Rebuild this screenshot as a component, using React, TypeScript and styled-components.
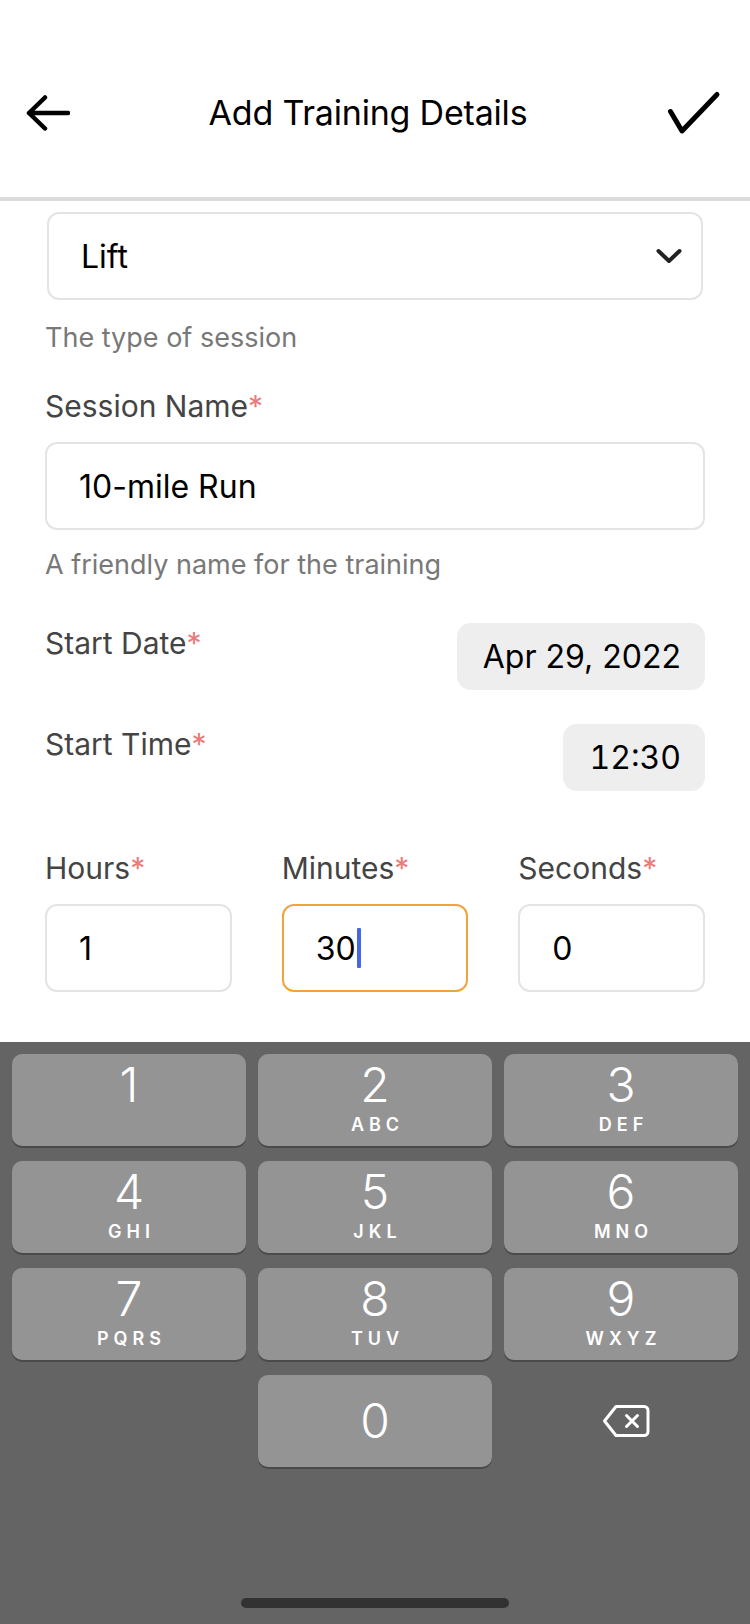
import React from "react";
import styled, { createGlobalStyle } from "styled-components";

const Global = createGlobalStyle`
  html, body { margin: 0; padding: 0; background: #fff; }
  body { font-family: Inter, "Liberation Sans", sans-serif; -webkit-font-smoothing: antialiased; }
  * { box-sizing: border-box; }
`;

const Screen = styled.div`
  width: 750px;
  height: 1624px;
  display: flex;
  flex-direction: column;
  overflow: hidden;
  background: #fff;
`;

const Header = styled.header`
  height: 201px;
  padding: 28px 28px 0 26px;
  display: flex;
  align-items: center;
  justify-content: space-between;
  border-bottom: 4px solid #dcdcdc;
  flex-shrink: 0;
`;

const Title = styled.h1`
  margin: 0;
  font-size: 34px;
  font-weight: 400;
  color: #000;
  letter-spacing: -0.2px;
`;

const IconButton = styled.button`
  border: 0;
  background: none;
  padding: 0;
  display: flex;
  align-items: center;
  justify-content: center;
`;

const Form = styled.main`
  flex: 1;
  padding: 11px 45px 0;
  display: flex;
  flex-direction: column;
`;

const SelectBox = styled.div`
  height: 88px;
  margin: 0 2px;
  border: 2px solid #e4e4e4;
  border-radius: 12px;
  padding: 0 19px 0 32px;
  display: flex;
  align-items: center;
  justify-content: space-between;
  font-size: 32px;
  color: #000;
`;

const Helper = styled.div<{ $mt?: number }>`
  margin-top: ${(p) => p.$mt ?? 18}px;
  font-size: 27px;
  line-height: 40px;
  color: #787878;
`;

const Label = styled.label<{ $mt?: number }>`
  display: block;
  margin-top: ${(p) => p.$mt ?? 0}px;
  font-size: 30px;
  line-height: 40px;
  color: #444;
`;

const Star = styled.span`
  color: #ec7a7a;
`;

const Field = styled.div<{ $focused?: boolean; $mt?: number }>`
  height: 88px;
  margin-top: ${(p) => p.$mt ?? 0}px;
  border: 2px solid ${(p) => (p.$focused ? "#f2a43a" : "#e4e4e4")};
  border-radius: 12px;
  padding: 0 32px;
  display: flex;
  align-items: center;
  font-size: 32px;
  color: #000;
`;

const Caret = styled.span`
  display: inline-block;
  width: 4px;
  height: 40px;
  margin-left: 1px;
  background: #4666e8;
  border-radius: 1px;
`;

const PickerRow = styled.div<{ $mt: number }>`
  margin-top: ${(p) => p.$mt}px;
  display: flex;
  justify-content: space-between;
  align-items: flex-start;
`;

const Pill = styled.div<{ $tabular?: boolean }>`
  height: 67px;
  padding: 0 24px 0 26px;
  border-radius: 14px;
  background: #eeeeee;
  font-size: 32px;
  line-height: 67px;
  color: #000;
  font-variant-numeric: ${(p) => (p.$tabular ? "tabular-nums" : "normal")};
`;

const DurationGrid = styled.div`
  margin-top: 57px;
  display: grid;
  grid-template-columns: repeat(3, 1fr);
  column-gap: 50px;
`;

const Keyboard = styled.div`
  height: 582px;
  flex-shrink: 0;
  background: #646464;
  padding: 12px 12px 0;
  display: flex;
  flex-direction: column;
`;

const Keys = styled.div`
  display: grid;
  grid-template-columns: repeat(3, 1fr);
  column-gap: 12px;
  row-gap: 15px;
  grid-auto-rows: 92px;
`;

const Key = styled.div<{ $centered?: boolean }>`
  background: #949494;
  border-radius: 10px;
  box-shadow: 0 2px 0 #4a4a4a;
  color: #fff;
  display: flex;
  flex-direction: column;
  align-items: center;
  justify-content: ${(p) => (p.$centered ? "center" : "flex-start")};
  padding-top: ${(p) => (p.$centered ? 0 : 7)}px;
`;

const Digit = styled.div`
  font-size: 48px;
  font-weight: 300;
  line-height: 48px;
`;

const Letters = styled.div`
  margin-top: 7px;
  padding-left: 5px;
  font-size: 18px;
  font-weight: 600;
  line-height: 18px;
  letter-spacing: 5px;
`;

const BlankKey = styled.div<{ $shift?: number }>`
  display: flex;
  align-items: center;
  justify-content: center;
  padding-left: ${(p) => p.$shift ?? 0}px;
`;

const HomeBar = styled.div`
  margin-top: auto;
  margin-bottom: 16px;
  align-self: center;
  width: 268px;
  height: 10px;
  border-radius: 5px;
  background: #323232;
`;

const keys: { d: string; l?: string }[] = [
  { d: "1" },
  { d: "2", l: "ABC" },
  { d: "3", l: "DEF" },
  { d: "4", l: "GHI" },
  { d: "5", l: "JKL" },
  { d: "6", l: "MNO" },
  { d: "7", l: "PQRS" },
  { d: "8", l: "TUV" },
  { d: "9", l: "WXYZ" },
];

export default function App() {
  return (
    <Screen>
      <Global />
      <Header>
        <IconButton aria-label="Back">
          <svg width="44" height="36" viewBox="0 0 44 36" fill="none">
            <path
              d="M3 18H42M3 18L19 2.5M3 18L19 33.5"
              stroke="#000"
              strokeWidth="4.5"
              strokeLinecap="round"
              strokeLinejoin="round"
            />
          </svg>
        </IconButton>
        <Title>Add Training Details</Title>
        <IconButton aria-label="Save">
          <svg width="56" height="48" viewBox="0 0 56 48" fill="none">
            <path
              d="M4.5 22.5L16 42L51 5.5"
              stroke="#000"
              strokeWidth="5"
              strokeLinecap="round"
              strokeLinejoin="round"
            />
          </svg>
        </IconButton>
      </Header>

      <Form>
        <SelectBox>
          <span>Lift</span>
          <svg width="26" height="16" viewBox="0 0 26 16" fill="none">
            <path
              d="M2.5 3L13 13L23.5 3"
              stroke="#222"
              strokeWidth="4"
              strokeLinecap="round"
              strokeLinejoin="round"
            />
          </svg>
        </SelectBox>
        <Helper>The type of session</Helper>

        <Label $mt={28}>
          Session Name<Star>*</Star>
        </Label>
        <Field $mt={16}>10-mile Run</Field>
        <Helper $mt={15}>A friendly name for the training</Helper>

        <PickerRow $mt={38}>
          <Label>
            Start Date<Star>*</Star>
          </Label>
          <Pill>Apr 29, 2022</Pill>
        </PickerRow>

        <PickerRow $mt={34}>
          <Label>
            Start Time<Star>*</Star>
          </Label>
          <Pill $tabular>12:30</Pill>
        </PickerRow>

        <DurationGrid>
          <div>
            <Label>
              Hours<Star>*</Star>
            </Label>
            <Field $mt={16}>1</Field>
          </div>
          <div>
            <Label>
              Minutes<Star>*</Star>
            </Label>
            <Field $mt={16} $focused>
              30
              <Caret />
            </Field>
          </div>
          <div>
            <Label>
              Seconds<Star>*</Star>
            </Label>
            <Field $mt={16}>0</Field>
          </div>
        </DurationGrid>
      </Form>

      <Keyboard>
        <Keys>
          {keys.map((k) => (
            <Key key={k.d}>
              <Digit>{k.d}</Digit>
              {k.l && <Letters>{k.l}</Letters>}
            </Key>
          ))}
          <BlankKey />
          <Key $centered>
            <Digit>0</Digit>
          </Key>
          <BlankKey $shift={9} aria-label="Delete">
            <svg width="48" height="36" viewBox="0 0 48 36" fill="none">
              <path
                d="M2.5 18L14 3.5H42A4 4 0 0 1 46 7.5V28.5A4 4 0 0 1 42 32.5H14Z"
                stroke="#fff"
                strokeWidth="3"
                strokeLinejoin="round"
              />
              <path
                d="M24.5 12.5L35.5 23.5M35.5 12.5L24.5 23.5"
                stroke="#fff"
                strokeWidth="3"
                strokeLinecap="round"
              />
            </svg>
          </BlankKey>
        </Keys>
        <HomeBar />
      </Keyboard>
    </Screen>
  );
}
